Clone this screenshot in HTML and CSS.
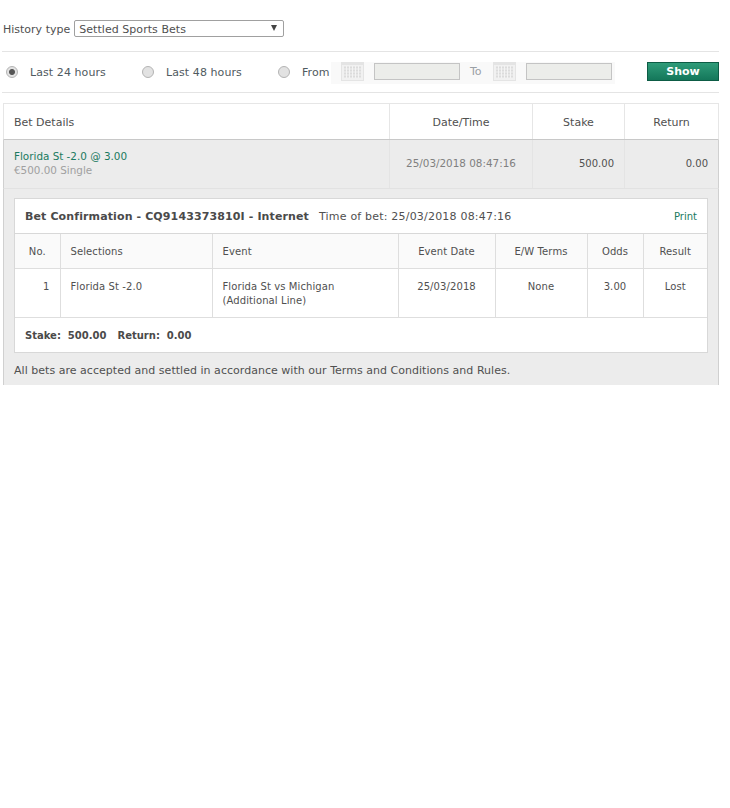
FILE: index.html
```html
<!DOCTYPE html>
<html>
<head>
    <title>Account History</title>
    <link rel="stylesheet" href="styles.css">
</head>
<body>
    <div class="history-page">
        <div class="type-row">
            <label class="type-label">History type</label>
            <div class="type-select">
                <span>Settled Sports Bets</span>
                <span class="select-arrow"></span>
            </div>
        </div>
        <div class="filter-row">
            <div class="radio-item radio-24">
                <span class="radio checked"></span>
                <span>Last 24 hours</span>
            </div>
            <div class="radio-item radio-48">
                <span class="radio"></span>
                <span>Last 48 hours</span>
            </div>
            <div class="radio-item radio-from">
                <span class="radio"></span>
                <span>From</span>
            </div>
            <div class="date-range">
                <svg class="calendar" width="23" height="19" viewBox="0 0 23 19">
                    <rect x="0" y="0" width="23" height="19" fill="#e4e4e4"/>
                    <rect x="1" y="3" width="21" height="15" fill="#f1f1f1"/>
                    <path d="M3 5.5h17M3 8.5h17M3 11.5h17M3 14.5h17" stroke="#dcdcdc" stroke-width="2"/>
                    <path d="M5.5 4v12M8.5 4v12M11.5 4v12M14.5 4v12M17.5 4v12" stroke="#f4f4f4" stroke-width="1"/>
                </svg>
                <div class="date-input"></div>
                <span class="to-label">To</span>
                <svg class="calendar" width="23" height="19" viewBox="0 0 23 19">
                    <rect x="0" y="0" width="23" height="19" fill="#e4e4e4"/>
                    <rect x="1" y="3" width="21" height="15" fill="#f1f1f1"/>
                    <path d="M3 5.5h17M3 8.5h17M3 11.5h17M3 14.5h17" stroke="#dcdcdc" stroke-width="2"/>
                    <path d="M5.5 4v12M8.5 4v12M11.5 4v12M14.5 4v12M17.5 4v12" stroke="#f4f4f4" stroke-width="1"/>
                </svg>
                <div class="date-input"></div>
            </div>
            <button class="show-btn">Show</button>
        </div>

        <div class="bets">
            <div class="bets-head">
                <div class="col-details">Bet Details</div>
                <div class="col-date">Date/Time</div>
                <div class="col-stake">Stake</div>
                <div class="col-return">Return</div>
            </div>
            <div class="bet-row">
                <div class="col-details">
                    <div class="bet-name">Florida St -2.0 @ 3.00</div>
                    <div class="bet-sub">€500.00 Single</div>
                </div>
                <div class="col-date bet-date">25/03/2018 08:47:16</div>
                <div class="col-stake bet-num">500.00</div>
                <div class="col-return bet-num">0.00</div>
            </div>
            <div class="bet-detail">
                <div class="confirm">
                    <div class="confirm-title">
                        <strong>Bet Confirmation - CQ9143373810I - Internet</strong>
                        <span class="bet-time">Time of bet: 25/03/2018 08:47:16</span>
                        <span class="print">Print</span>
                    </div>
                    <table class="confirm-table">
                        <colgroup>
                            <col class="w-no">
                            <col class="w-sel">
                            <col class="w-event">
                            <col class="w-date">
                            <col class="w-terms">
                            <col class="w-odds">
                            <col class="w-result">
                        </colgroup>
                        <thead>
                            <tr>
                                <th>No.</th>
                                <th class="left">Selections</th>
                                <th class="left">Event</th>
                                <th>Event Date</th>
                                <th>E/W Terms</th>
                                <th>Odds</th>
                                <th>Result</th>
                            </tr>
                        </thead>
                        <tbody>
                            <tr>
                                <td class="num">1</td>
                                <td class="left">Florida St -2.0</td>
                                <td class="left">Florida St vs Michigan<br>(Additional Line)</td>
                                <td>25/03/2018</td>
                                <td>None</td>
                                <td>3.00</td>
                                <td>Lost</td>
                            </tr>
                        </tbody>
                    </table>
                    <div class="confirm-total">
                        <span>Stake:&nbsp; 500.00</span>
                        <span>Return:&nbsp; 0.00</span>
                    </div>
                </div>
                <p class="terms">All bets are accepted and settled in accordance with our Terms and Conditions and Rules.</p>
            </div>
        </div>
    </div>
</body>
</html>
```

FILE: styles.css
```css
body {
    margin: 0;
    background: #fff;
    font-family: "DejaVu Sans", Verdana, sans-serif;
    font-size: 11px;
    color: #505050;
}

.history-page {
    width: 717px;
    margin-left: 2px;
    padding-top: 20px;
}

.type-row {
    display: flex;
    align-items: flex-start;
    gap: 4px;
    height: 31px;
    padding-left: 1px;
    border-bottom: 1px solid #e4e4e4;
}

.type-label {
    line-height: 18px;
    padding-top: 1px;
}

.type-select {
    display: flex;
    justify-content: space-between;
    align-items: center;
    box-sizing: border-box;
    width: 210px;
    height: 17px;
    padding: 1px 6px 0 4px;
    border: 1px solid #a0a0a0;
    border-radius: 2px;
    letter-spacing: 0.05px;
}

.select-arrow {
    width: 0;
    height: 0;
    margin-bottom: 3px;
    border-left: 3px solid transparent;
    border-right: 3px solid transparent;
    border-top: 6px solid #444;
}

.filter-row {
    display: flex;
    align-items: center;
    height: 40px;
    border-bottom: 1px solid #e4e4e4;
    color: #505a60;
}

.radio-item {
    display: flex;
    align-items: center;
    gap: 12px;
    padding-left: 4px;
    letter-spacing: 0.08px;
}

.radio-24 { width: 132px; }
.radio-48 { width: 132px; }
.radio-from { width: 55px; }

.radio {
    box-sizing: border-box;
    width: 12px;
    height: 12px;
    border: 1px solid #b4b4b4;
    border-radius: 50%;
    background: #e2e2e2;
}

.radio.checked {
    background: radial-gradient(circle, #555 0 2.5px, #e2e2e2 3.5px);
}

.date-range {
    display: flex;
    align-items: flex-start;
    box-sizing: border-box;
    width: 284px;
    height: 22px;
    padding-left: 10px;
    margin: 2px 0 0 -2px;
    background: #f9f9f9;
}

.calendar {
    flex: none;
}

.date-input {
    box-sizing: border-box;
    width: 86px;
    height: 17px;
    margin: 1px 0 0 10px;
    border: 1px solid #c4c4c4;
    background: #ecedea;
}

.to-label {
    width: 33px;
    padding-left: 10px;
    box-sizing: border-box;
    line-height: 20px;
    color: #9aa0a6;
}

.show-btn {
    box-sizing: border-box;
    width: 72px;
    height: 19px;
    margin: 0 0 2px auto;
    padding: 0;
    border: 1px solid #0d5c45;
    background: linear-gradient(#2f9c79, #14775a);
    color: #fff;
    font-family: "DejaVu Sans", Verdana, sans-serif;
    font-size: 11px;
    font-weight: bold;
}

.bets {
    margin: 10px 0 0 1px;
    border-top: 1px solid #e6e6e6;
}

.bets-head,
.bet-row {
    display: flex;
}

.bets-head {
    height: 35px;
    line-height: 37px;
    border-left: 1px solid #e6e6e6;
    border-right: 1px solid #e6e6e6;
    border-bottom: 1px solid #c8c8c8;
}

.col-details {
    box-sizing: border-box;
    width: 385px;
    padding-left: 10px;
}

.col-date,
.col-stake,
.col-return {
    box-sizing: border-box;
    border-left: 1px solid #e6e6e6;
    text-align: center;
}

.col-date { width: 143px; }
.col-stake { width: 92px; }
.col-return { width: 94px; }

.bet-row {
    height: 48px;
    background: #ececec;
    border-left: 1px solid #d0d0d0;
    border-right: 1px solid #d0d0d0;
    border-bottom: 1px solid #e2e2e2;
    align-items: stretch;
    font-size: 10.4px;
}

.bet-row .col-details {
    padding-top: 9px;
    line-height: 14px;
}

.bet-name { color: #1a7a60; }
.bet-sub { color: #a0a0a0; }

.bet-row .col-date,
.bet-row .col-stake,
.bet-row .col-return {
    line-height: 47px;
    border-left-color: #e4e4e4;
}

.bet-date { color: #808080; }

.bet-row .bet-num {
    padding-right: 10px;
    text-align: right;
    font-size: 10px;
}

.bet-detail {
    height: 196px;
    box-sizing: border-box;
    padding: 9px 10px 0;
    background: #ececec;
    border-left: 1px solid #d0d0d0;
    border-right: 1px solid #d0d0d0;
}

.confirm {
    box-sizing: border-box;
    width: 694px;
    border: 1px solid #d8d8d8;
    background: #fff;
}

.confirm-title {
    display: flex;
    align-items: center;
    height: 34px;
    padding: 0 10px;
    border-bottom: 1px solid #d8d8d8;
}

.confirm-title strong {
    color: #4a4a4a;
    letter-spacing: 0.12px;
}

.bet-time {
    margin-left: 10px;
    color: #505050;
    letter-spacing: 0.2px;
}

.print {
    margin-left: auto;
    color: #1a7a60;
    font-size: 10px;
}

.confirm-table {
    width: 692px;
    table-layout: fixed;
    border-collapse: collapse;
}

.w-no { width: 45px; }
.w-sel { width: 152px; }
.w-event { width: 186px; }
.w-date { width: 97px; }
.w-terms { width: 92px; }
.w-odds { width: 56px; }
.w-result { width: 64px; }

.confirm-table th,
.confirm-table td {
    padding: 0 10px;
    border-left: 1px solid #dedede;
    border-bottom: 1px solid #dedede;
    text-align: center;
    font-size: 10px;
    font-weight: normal;
    letter-spacing: 0.1px;
}

.confirm-table th:first-child,
.confirm-table td:first-child {
    border-left: 0;
}

.confirm-table th {
    height: 34px;
    background: #fafafa;
}

.confirm-table td {
    height: 49px;
    padding-top: 11px;
    box-sizing: border-box;
    vertical-align: top;
    line-height: 14px;
}

.confirm-table .left {
    text-align: left;
}

.confirm-table .num {
    text-align: right;
}

.confirm-total {
    display: flex;
    gap: 11px;
    align-items: center;
    height: 34px;
    padding: 0 10px;
    font-size: 10px;
    font-weight: bold;
    color: #4a4a4a;
}

.terms {
    margin: 11px 0 0;
    line-height: 14px;
    letter-spacing: 0.03px;
}
```
